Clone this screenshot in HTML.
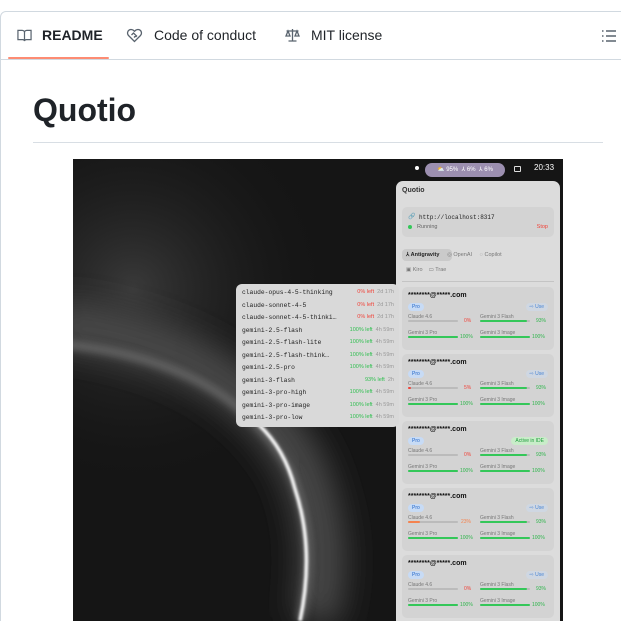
<!DOCTYPE html>
<html style="width:621px;height:621px;overflow:hidden"><head><meta charset="utf-8"><style>
*{box-sizing:border-box;margin:0;padding:0}
body{width:621px;height:621px;overflow:hidden;background:#fff;font-family:"Liberation Sans",sans-serif;color:#1f2328;position:relative}
.box{position:absolute;left:0;top:11px;width:640px;height:640px;border:1px solid #d1d9e0;border-radius:6px}
.tabs{position:absolute;left:0;top:12px;width:621px;height:48px;border-bottom:1px solid #d1d9e0}
.tab{position:absolute;top:15px;font-size:14px;color:#1f2328;display:flex;align-items:center;gap:9px}
.ul{position:absolute;left:8px;top:57px;width:101px;height:2px;background:#fd8c73;border-radius:2px}
h1{position:absolute;left:33px;top:92px;font-size:32px;font-weight:bold}
.hr{position:absolute;left:33px;top:142px;width:570px;height:1px;background:#d8dee4}
.img{position:absolute;left:73px;top:159px;width:490px;height:462px;background:#151515;overflow:hidden}
.pill{position:absolute;left:352px;top:4px;width:80px;height:14px;border-radius:7px;background:#9c8fb0;color:#fff;font-size:6px;line-height:14px;text-align:center}
.panel{position:absolute;left:323px;top:22px;width:164px;height:460px;background:#dcdcdc;border-radius:7px;font-size:6px;color:#333}
.card{position:absolute;left:6px;width:152px;height:63px;background:#d3d3d3;border-radius:5px}
.card .em{position:absolute;left:6px;top:5px;font-size:7px;color:#111;font-weight:bold}
.badge{position:absolute;left:6px;top:16px;background:#c7dbf5;color:#2467c8;font-size:5px;padding:1px 4px;border-radius:4px}
.use{position:absolute;right:6px;top:16px;background:#cfd7e2;color:#4a86d4;font-size:5px;padding:1px 4px;border-radius:4px}
.act{position:absolute;right:6px;top:16px;background:#c9ecc9;color:#1e9e3c;font-size:5px;padding:1px 4px;border-radius:4px}
.lb{position:absolute;font-size:5px;color:#777}
.bar{position:absolute;height:2px;width:50px;background:#bbb;border-radius:1px}
.bar i{display:block;height:2px;background:#34c759;border-radius:1px}
.pct{position:absolute;font-size:5px;color:#2fb54c}
.pop{position:absolute;left:163px;top:125px;width:163px;height:143px;background:#d9d9d9;border-radius:6px;font-size:6.3px}
.row{position:absolute;left:6px;width:152px;font-family:"Liberation Mono",monospace;color:#222}
.row .r{position:absolute;right:0;font-family:"Liberation Sans",sans-serif;font-size:5.5px;color:#999}
.row b{font-weight:normal;color:#2fbf4f}
.row b.red{color:#f0443a}
</style></head><body>
<div class="box"></div>
<div class="tabs"></div>
<div class="tab" style="left:16px;top:27px"><svg width="17" height="15" viewBox="0 0 16 16" fill="none" stroke="#59636e" stroke-width="1.3"><path d="M1 2.5h4.5c1.4 0 2.5 1 2.5 2.3V14c0-1-.9-1.6-2-1.6H1z M15 2.5h-4.5C9.1 2.5 8 3.5 8 4.8V14c0-1 .9-1.6 2-1.6h5z"/></svg><b>README</b></div>
<div class="tab" style="left:126px;top:27px;gap:11px"><svg width="17" height="16" viewBox="0 0 16 16" fill="none" stroke="#59636e" stroke-width="1.3"><path d="M8 14.5 2 8.5C.5 7 .8 4.2 2.6 3.1 4.3 2 6.5 2.6 8 4.3 9.5 2.6 11.7 2 13.4 3.1c1.8 1.1 2.1 3.9.6 5.4z M5 8l2 -2 2.5 2.5-2 2M9 10l1.5-1.5"/></svg><span>Code of conduct</span></div>
<div class="tab" style="left:284px;top:27px;gap:10px"><svg width="17" height="16" viewBox="0 0 16 16" fill="none" stroke="#59636e" stroke-width="1.3"><path d="M8 2v12M4 14h8M2 4h12M3.5 4 1.5 9h4zM12.5 4l-2 5h4z"/></svg><span>MIT license</span></div>
<svg style="position:absolute;left:601px;top:29px" width="16" height="14" viewBox="0 0 16 14" stroke="#59636e" stroke-width="1.4"><path d="M1 2h1.5M1 7h1.5M1 12h1.5M5 2h10M5 7h10M5 12h10"/></svg>
<div class="ul"></div>
<h1>Quotio</h1>
<div class="hr"></div>
<div class="img">
<svg width="490" height="462" style="position:absolute;left:0;top:0">
<defs>
<radialGradient id="hz" cx="60" cy="130" r="200" gradientUnits="userSpaceOnUse"><stop offset="0" stop-color="#3a3a3a"/><stop offset="1" stop-color="#151515" stop-opacity="0"/></radialGradient>
<filter id="b1" filterUnits="userSpaceOnUse" x="-200" y="-200" width="900" height="900"><feGaussianBlur stdDeviation="16"/></filter>
<filter id="b2" filterUnits="userSpaceOnUse" x="-200" y="-200" width="900" height="900"><feGaussianBlur stdDeviation="4"/></filter>
<filter id="b3" filterUnits="userSpaceOnUse" x="-200" y="-200" width="900" height="900"><feGaussianBlur stdDeviation="1.2"/></filter>
</defs>
<rect width="490" height="462" fill="url(#hz)"/>
<path d="M-20,165 Q160,185 228,305 Q262,380 242,462" stroke="#484848" stroke-width="45" fill="none" filter="url(#b1)"/>
<path d="M-13,185 Q157,201 217,311 Q247,381 227,462" stroke="#777" stroke-width="8" fill="none" filter="url(#b2)" opacity=".7"/>
<path d="M185,265 Q212,290 222,330 Q242,390 227,462" stroke="#fff" stroke-width="3.5" fill="none" filter="url(#b3)"/>
</svg>
<div style="position:absolute;left:342px;top:7px;width:4px;height:4px;border-radius:2px;background:#fff"></div>
<div class="pill">⛅ 95% &nbsp;⅄ 6% &nbsp;⅄ 6%</div>
<div style="position:absolute;left:441px;top:7px;width:7px;height:6px;border:1px solid #ddd;border-radius:1px"></div>
<div style="position:absolute;left:461px;top:4px;color:#fff;font-size:8px">20:33</div>
<div class="panel">
<div style="position:absolute;left:6px;top:6px;font-size:7px;font-weight:bold;color:#333">Quotio</div>
<div style="position:absolute;left:6px;top:26px;width:152px;height:30px;background:#d3d3d3;border-radius:5px">
<div style="position:absolute;left:6px;top:6px;font-size:6px;color:#777">🔗</div>
<div style="position:absolute;left:17px;top:7px;font-family:'Liberation Mono',monospace;font-size:6px;color:#222">http://localhost:8317</div>
<div style="position:absolute;left:6px;top:18px;width:4px;height:4px;border-radius:2px;background:#34c759"></div>
<div style="position:absolute;left:15px;top:17px;font-size:5.5px;color:#666">Running</div>
<div style="position:absolute;right:6px;top:17px;font-size:5.5px;color:#f0443a">Stop</div></div>
<div style="position:absolute;left:6px;top:68px;width:50px;height:12px;background:#cacaca;border-radius:4px"></div>
<div style="position:absolute;left:10px;top:71px;font-size:5.5px;font-weight:bold;color:#222">⅄ Antigravity &nbsp;&nbsp;&nbsp;&nbsp;<span style="font-weight:normal;color:#777">◎ OpenAI &nbsp;&nbsp;&nbsp; ◌ Copilot</span></div>
<div style="position:absolute;left:10px;top:86px;font-size:5.5px;color:#777">▣ Kiro &nbsp;&nbsp; ▭ Trae</div>
<div style="position:absolute;left:6px;top:100px;width:152px;height:1px;background:#c4c4c4"></div>
<div class="card" style="top:106px"><div class="em">********@*****.com</div><div class="badge">Pro</div><div class="use">⇨ Use</div>
<div class="lb" style="left:6px;top:27px">Claude 4.6</div><div class="bar" style="left:6px;top:33px"></div><div class="pct" style="left:62px;top:31px;color:#f0443a">0%</div>
<div class="lb" style="left:78px;top:27px">Gemini 3 Flash</div><div class="bar" style="left:78px;top:33px"><i style="width:93%"></i></div><div class="pct" style="left:134px;top:31px">93%</div>
<div class="lb" style="left:6px;top:43px">Gemini 3 Pro</div><div class="bar" style="left:6px;top:49px"><i style="width:100%"></i></div><div class="pct" style="left:58px;top:47px">100%</div>
<div class="lb" style="left:78px;top:43px">Gemini 3 Image</div><div class="bar" style="left:78px;top:49px"><i style="width:100%"></i></div><div class="pct" style="left:130px;top:47px">100%</div></div>
<div class="card" style="top:173px"><div class="em">********@*****.com</div><div class="badge">Pro</div><div class="use">⇨ Use</div>
<div class="lb" style="left:6px;top:27px">Claude 4.6</div><div class="bar" style="left:6px;top:33px"><i style="width:5%;background:#f0443a"></i></div><div class="pct" style="left:62px;top:31px;color:#f0443a">5%</div>
<div class="lb" style="left:78px;top:27px">Gemini 3 Flash</div><div class="bar" style="left:78px;top:33px"><i style="width:93%"></i></div><div class="pct" style="left:134px;top:31px">93%</div>
<div class="lb" style="left:6px;top:43px">Gemini 3 Pro</div><div class="bar" style="left:6px;top:49px"><i style="width:100%"></i></div><div class="pct" style="left:58px;top:47px">100%</div>
<div class="lb" style="left:78px;top:43px">Gemini 3 Image</div><div class="bar" style="left:78px;top:49px"><i style="width:100%"></i></div><div class="pct" style="left:130px;top:47px">100%</div></div>
<div class="card" style="top:240px"><div class="em">********@*****.com</div><div class="badge">Pro</div><div class="act">Active in IDE</div>
<div class="lb" style="left:6px;top:27px">Claude 4.6</div><div class="bar" style="left:6px;top:33px"></div><div class="pct" style="left:62px;top:31px;color:#f0443a">0%</div>
<div class="lb" style="left:78px;top:27px">Gemini 3 Flash</div><div class="bar" style="left:78px;top:33px"><i style="width:93%"></i></div><div class="pct" style="left:134px;top:31px">93%</div>
<div class="lb" style="left:6px;top:43px">Gemini 3 Pro</div><div class="bar" style="left:6px;top:49px"><i style="width:100%"></i></div><div class="pct" style="left:58px;top:47px">100%</div>
<div class="lb" style="left:78px;top:43px">Gemini 3 Image</div><div class="bar" style="left:78px;top:49px"><i style="width:100%"></i></div><div class="pct" style="left:130px;top:47px">100%</div></div>
<div class="card" style="top:307px"><div class="em">********@*****.com</div><div class="badge">Pro</div><div class="use">⇨ Use</div>
<div class="lb" style="left:6px;top:27px">Claude 4.6</div><div class="bar" style="left:6px;top:33px"><i style="width:23%;background:#f5834f"></i></div><div class="pct" style="left:59px;top:31px;color:#f5834f">23%</div>
<div class="lb" style="left:78px;top:27px">Gemini 3 Flash</div><div class="bar" style="left:78px;top:33px"><i style="width:93%"></i></div><div class="pct" style="left:134px;top:31px">93%</div>
<div class="lb" style="left:6px;top:43px">Gemini 3 Pro</div><div class="bar" style="left:6px;top:49px"><i style="width:100%"></i></div><div class="pct" style="left:58px;top:47px">100%</div>
<div class="lb" style="left:78px;top:43px">Gemini 3 Image</div><div class="bar" style="left:78px;top:49px"><i style="width:100%"></i></div><div class="pct" style="left:130px;top:47px">100%</div></div>
<div class="card" style="top:374px"><div class="em">********@*****.com</div><div class="badge">Pro</div><div class="use">⇨ Use</div>
<div class="lb" style="left:6px;top:27px">Claude 4.6</div><div class="bar" style="left:6px;top:33px"></div><div class="pct" style="left:62px;top:31px;color:#f0443a">0%</div>
<div class="lb" style="left:78px;top:27px">Gemini 3 Flash</div><div class="bar" style="left:78px;top:33px"><i style="width:93%"></i></div><div class="pct" style="left:134px;top:31px">93%</div>
<div class="lb" style="left:6px;top:43px">Gemini 3 Pro</div><div class="bar" style="left:6px;top:49px"><i style="width:100%"></i></div><div class="pct" style="left:58px;top:47px">100%</div>
<div class="lb" style="left:78px;top:43px">Gemini 3 Image</div><div class="bar" style="left:78px;top:49px"><i style="width:100%"></i></div><div class="pct" style="left:130px;top:47px">100%</div></div>
</div>
<div class="pop">
<div class="row" style="top:5px">claude-opus-4-5-thinking<span class="r"><b class="red">0% left</b> &nbsp;2d 17h</span></div>
<div class="row" style="top:17.5px">claude-sonnet-4-5<span class="r"><b class="red">0% left</b> &nbsp;2d 17h</span></div>
<div class="row" style="top:30px">claude-sonnet-4-5-thinki…<span class="r"><b class="red">0% left</b> &nbsp;2d 17h</span></div>
<div class="row" style="top:42.5px">gemini-2.5-flash<span class="r"><b>100% left</b> &nbsp;4h 59m</span></div>
<div class="row" style="top:55px">gemini-2.5-flash-lite<span class="r"><b>100% left</b> &nbsp;4h 59m</span></div>
<div class="row" style="top:67.5px">gemini-2.5-flash-think…<span class="r"><b>100% left</b> &nbsp;4h 59m</span></div>
<div class="row" style="top:80px">gemini-2.5-pro<span class="r"><b>100% left</b> &nbsp;4h 59m</span></div>
<div class="row" style="top:92.5px">gemini-3-flash<span class="r"><b>93% left</b> &nbsp;2h</span></div>
<div class="row" style="top:105px">gemini-3-pro-high<span class="r"><b>100% left</b> &nbsp;4h 59m</span></div>
<div class="row" style="top:117.5px">gemini-3-pro-image<span class="r"><b>100% left</b> &nbsp;4h 59m</span></div>
<div class="row" style="top:130px">gemini-3-pro-low<span class="r"><b>100% left</b> &nbsp;4h 59m</span></div>
</div>
</div>
</body></html>
